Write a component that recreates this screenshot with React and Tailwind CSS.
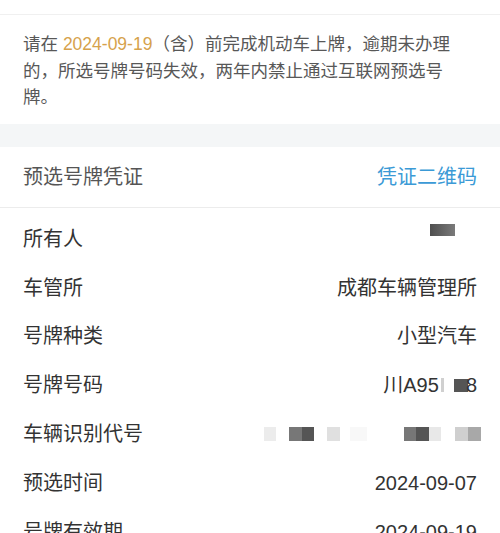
import React from 'react';

const rows = [
    { label: '所有人', value: 'owner' },
    { label: '车管所', value: '成都车辆管理所' },
    { label: '号牌种类', value: '小型汽车' },
    { label: '号牌号码', value: 'plate' },
    { label: '车辆识别代号', value: 'vin' },
    { label: '预选时间', value: '2024-09-07' },
    { label: '号牌有效期', value: '2024-09-19' },
];

function Value({ value }) {
    if (value === 'owner') {
        return (
            <div className="w-[25px] h-[12px] mb-[17px] mr-[22px] bg-gradient-to-r from-[#4f4f4f] to-[#7a7a7a]" />
        );
    }
    if (value === 'plate') {
        return (
            <div className="flex items-center">
                <span>川A95</span>
                <span className="w-[3px] h-[14px] ml-[2px] bg-[#d0d0d0]" />
                <span className="w-[14px] h-[13px] ml-[10px] bg-[#555]" />
                <span className="-ml-[2px]">8</span>
            </div>
        );
    }
    if (value === 'vin') {
        return (
            <div className="flex items-center h-[14px] mr-[-4px]">
                <span className="w-[12px] h-[14px] bg-[#ececec]" />
                <span className="w-[13px] h-[14px] ml-[13px] bg-[#777]" />
                <span className="w-[12px] h-[14px] bg-[#555]" />
                <span className="w-[13px] h-[14px] ml-[13px] bg-[#e0e0e0]" />
                <span className="w-[17px] h-[14px] ml-[10px] bg-[#f8f8f8]" />
                <span className="w-[12px] h-[14px] ml-[37px] bg-[#777]" />
                <span className="w-[13px] h-[14px] bg-[#555]" />
                <span className="w-[12px] h-[14px] bg-[#e8e8e8]" />
                <span className="w-[13px] h-[14px] ml-[14px] bg-[#cfcfcf]" />
                <span className="w-[13px] h-[14px] bg-[#a8a8a8]" />
            </div>
        );
    }
    return <span>{value}</span>;
}

export default function App() {
    return (
        <div className="w-[500px] h-[533px] overflow-hidden bg-white" style={{ fontFamily: '"Liberation Sans", "Noto Sans CJK SC", sans-serif' }}>
            <div className="h-[15px] border-b border-[#f0f0f0]" />
            <div className="px-[23px] pt-[16px] pb-[13px] text-[17.5px] leading-[26.5px] text-[#585858]">
                请在 <span className="text-[#d6a24c]">2024-09-19</span>（含）前完成机动车上牌，逾期未办理的，所选号牌号码失效，两年内禁止通过互联网预选号牌。
            </div>
            <div className="h-[23px] bg-[#f4f6f7]" />
            <div className="h-[61px] px-[23px] flex items-center justify-between border-b border-[#ececec] text-[20px]">
                <span className="text-[#555]">预选号牌凭证</span>
                <span className="text-[#3b9ad6]">凭证二维码</span>
            </div>
            <div className="pt-[7px]">
                {rows.map(r => (
                    <div key={r.label} className="h-[48.8px] px-[23px] flex items-center justify-between text-[20px] text-[#333]">
                        <span>{r.label}</span>
                        <Value value={r.value} />
                    </div>
                ))}
            </div>
        </div>
    );
}
